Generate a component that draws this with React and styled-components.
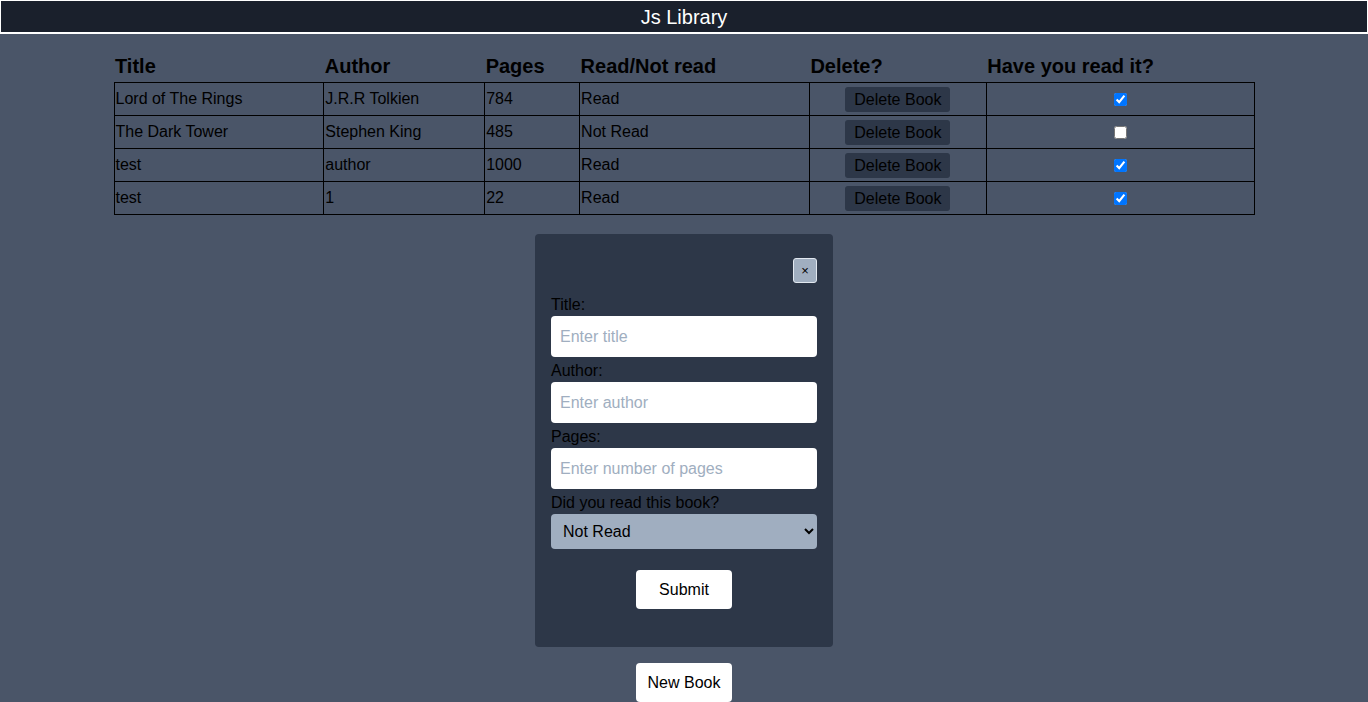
import React, { useState } from 'react';
import styled, { createGlobalStyle } from 'styled-components';

const GlobalStyle = createGlobalStyle`
  * { box-sizing: border-box; }
  body {
    margin: 0;
    background-color: #4a5568;
    font-family: "Liberation Sans", Arial, sans-serif;
    color: #000;
  }
`;

const Header = styled.header`
  height: 34px;
  padding-top: 2px;
  display: flex;
  align-items: center;
  justify-content: center;
  background-color: #1a202c;
  border: 1px solid #fff;
  border-bottom-width: 2px;
  color: #fff;
  font-size: 20px;
`;

const Main = styled.main`
  display: flex;
  flex-direction: column;
  align-items: center;
`;

const Table = styled.table`
  width: 1141px;
  margin-top: 17px;
  border-collapse: collapse;
`;

const Th = styled.th`
  height: 31px;
  padding: 1px 1px 0;
  text-align: left;
  font-size: 20px;
  font-weight: 700;
`;

const Td = styled.td`
  height: 33px;
  padding: 1px 1px 0;
  border: 1px solid #000;
  font-size: 16px;
  text-align: ${(p) => (p.center ? 'center' : 'left')};
  vertical-align: middle;
`;

const DeleteButton = styled.button`
  padding: 3px 9px;
  border: 0;
  border-radius: 3px;
  background-color: #2d3748;
  color: #000;
  font-family: inherit;
  font-size: 16px;
  line-height: 19px;
  cursor: pointer;
`;

const Check = styled.input`
  width: 13px;
  height: 13px;
  margin: 0;
  vertical-align: middle;
`;

const Modal = styled.form`
  width: 298px;
  margin-top: 19px;
  padding: 24px 16px 38px;
  background-color: #2d3748;
  border-radius: 4px;
  display: flex;
  flex-direction: column;
`;

const CloseRow = styled.div`
  display: flex;
  justify-content: flex-end;
  margin-bottom: 11px;
`;

const CloseButton = styled.button`
  width: 24px;
  height: 25px;
  padding: 0;
  border: 1px solid #e2e8f0;
  border-radius: 3px;
  background-color: #a0aec0;
  color: #000;
  font-size: 13px;
  line-height: 1;
  cursor: pointer;
`;

const Label = styled.label`
  display: block;
  font-size: 16px;
  line-height: 22px;
  margin-top: ${(p) => (p.first ? '0' : '3px')};
`;

const Input = styled.input`
  width: 100%;
  height: 41px;
  padding: 1px 9px 0;
  border: 0;
  border-radius: 4px;
  background: #fff;
  font-family: inherit;
  font-size: 16px;
  outline: none;

  &::placeholder {
    color: #a0aec0;
  }
`;

const Select = styled.select`
  width: 100%;
  height: 35px;
  padding: 0 8px;
  border: 0;
  border-radius: 4px;
  background-color: #a0aec0;
  color: #000;
  font-family: inherit;
  font-size: 16px;
`;

const WhiteButton = styled.button`
  align-self: center;
  width: 96px;
  height: 39px;
  margin-top: ${(p) => p.top || '0'};
  padding-top: 2px;
  border: 0;
  border-radius: 4px;
  background-color: #fff;
  color: #000;
  font-family: inherit;
  font-size: 16px;
  cursor: pointer;
`;

const books = [
  { title: 'Lord of The Rings', author: 'J.R.R Tolkien', pages: 784, read: true },
  { title: 'The Dark Tower', author: 'Stephen King', pages: 485, read: false },
  { title: 'test', author: 'author', pages: 1000, read: true },
  { title: 'test', author: '1', pages: 22, read: true },
];

const colWidths = [210, 161, 95, 230, 177, 268];

const App = () => {
  const [list, setList] = useState(books);

  const toggle = (i) =>
    setList(list.map((b, j) => (j === i ? { ...b, read: !b.read } : b)));

  return (
    <>
      <GlobalStyle />
      <Header>Js Library</Header>
      <Main>
        <Table>
          <colgroup>
            {colWidths.map((w, i) => (
              <col key={i} style={{ width: w }} />
            ))}
          </colgroup>
          <thead>
            <tr>
              <Th>Title</Th>
              <Th>Author</Th>
              <Th>Pages</Th>
              <Th>Read/Not read</Th>
              <Th>Delete?</Th>
              <Th>Have you read it?</Th>
            </tr>
          </thead>
          <tbody>
            {list.map((book, i) => (
              <tr key={i}>
                <Td>{book.title}</Td>
                <Td>{book.author}</Td>
                <Td>{book.pages}</Td>
                <Td>{book.read ? 'Read' : 'Not Read'}</Td>
                <Td center>
                  <DeleteButton>Delete Book</DeleteButton>
                </Td>
                <Td center>
                  <Check type="checkbox" checked={book.read} onChange={() => toggle(i)} />
                </Td>
              </tr>
            ))}
          </tbody>
        </Table>

        <Modal onSubmit={(e) => e.preventDefault()}>
          <CloseRow>
            <CloseButton type="button">×</CloseButton>
          </CloseRow>
          <Label first>Title:</Label>
          <Input placeholder="Enter title" />
          <Label>Author:</Label>
          <Input placeholder="Enter author" />
          <Label>Pages:</Label>
          <Input placeholder="Enter number of pages" />
          <Label>Did you read this book?</Label>
          <Select defaultValue="no">
            <option value="no">Not Read</option>
            <option value="yes">Read</option>
          </Select>
          <WhiteButton type="submit" top="21px">Submit</WhiteButton>
        </Modal>

        <WhiteButton top="16px">New Book</WhiteButton>
      </Main>
    </>
  );
};

export default App;
